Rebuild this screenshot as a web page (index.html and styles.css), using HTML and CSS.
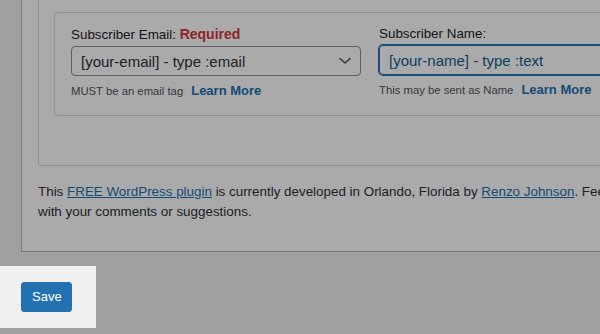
FILE: index.html
```html
<!DOCTYPE html>
<html>
<head>
<meta charset="utf-8">
<link rel="stylesheet" href="styles.css">
</head>
<body>
<div class="panel">
  <div class="card">
    <div class="fieldset">
      <div class="field">
        <div class="label">Subscriber Email: <strong class="req">Required</strong></div>
        <div class="select">
          <span>[your-email] - type :email</span>
          <svg class="chev" width="12" height="8" viewBox="0 0 12 8"><path d="M1 1.5 L6 6 L11 1.5" fill="none" stroke="#50575e" stroke-width="1.6" stroke-linecap="round" stroke-linejoin="round"/></svg>
        </div>
        <div class="help"><span>MUST be an email tag</span><a class="more">Learn More</a></div>
      </div>
      <div class="field">
        <div class="label">Subscriber Name:</div>
        <div class="input focus"><span>[your-name] - type :text</span></div>
        <div class="help"><span>This may be sent as Name</span><a class="more">Learn More</a></div>
      </div>
    </div>
  </div>
  <p class="credit">This <a class="ul">FREE WordPress plugin</a> is currently developed in Orlando, Florida by <a class="ul">Renzo Johnson</a>. Feel free to contact me with your comments or suggestions.</p>
</div>
<div class="submit"><button class="btn">Save</button></div>
<div class="spotlight"></div>
</body>
</html>
```

FILE: styles.css
```css
html, body {
  margin: 0;
  padding: 0;
}
body {
  background: #f0f0f1;
  font-family: "Liberation Sans", Arial, sans-serif;
  color: #3c434a;
  width: 600px;
  height: 334px;
  overflow: hidden;
  position: relative;
}
.panel {
  margin-left: 21px;
  width: 760px;
  background: #fff;
  border-left: 1px solid #b4b4b4;
  border-bottom: 1px solid #b4b4b4;
  padding: 0 16px 29px;
  box-sizing: border-box;
}
.card {
  border: 1px solid #dcdcde;
  border-top: none;
  border-radius: 0 0 2px 2px;
  padding: 12px 15px 49px;
  box-shadow: 0 1px 1px rgba(0,0,0,.04);
}
.fieldset {
  border: 1px solid #dcdcde;
  border-radius: 4px;
  padding: 12px 16px 15px;
  display: flex;
  gap: 18px;
}
.field {
  width: 290px;
  flex: none;
}
.label {
  font-size: 13.4px;
  line-height: 18px;
  color: #1d2327;
  margin-bottom: 2px;
}
.req {
  color: #d63638;
  font-weight: bold;
  font-size: 14px;
}
.select, .input {
  height: 30px;
  box-sizing: border-box;
  border: 1px solid #8c8f94;
  border-radius: 4px;
  display: flex;
  align-items: center;
  padding: 0 8px 0 9px;
  font-size: 15px;
  color: #2c3338;
}
.select span, .input span {
  flex: 1;
}
.chev {
  margin-right: 1px;
}
.input.focus {
  border-color: #2271b1;
  box-shadow: 0 0 0 1px #2271b1;
  color: #135e96;
}
.help {
  margin-top: 6px;
  line-height: 18px;
  display: flex;
  align-items: center;
  gap: 8px;
  font-size: 11.3px;
  color: #50575e;
}
.more {
  font-size: 13px;
  font-weight: bold;
  color: #2271b1;
}
.credit {
  margin: 16px 0 0;
  font-size: 13.4px;
  line-height: 20px;
  color: #2c3338;
  width: 695px;
}
.ul {
  color: #2271b1;
  text-decoration: underline;
}
.submit {
  padding: 30px 0 0 21px;
}
.btn {
  display: block;
  height: 30px;
  padding: 0 10px;
  margin: 0;
  border: 1px solid #2271b1;
  border-radius: 3px;
  background: #2271b1;
  color: #fff;
  font-family: "Liberation Sans", Arial, sans-serif;
  font-size: 13px;
  line-height: 28px;
  width: 51px;
}
.spotlight {
  position: absolute;
  left: 0;
  top: 266px;
  width: 96px;
  height: 62px;
  box-shadow: 0 0 0 2000px rgba(0,0,0,0.333);
  pointer-events: none;
}
```
